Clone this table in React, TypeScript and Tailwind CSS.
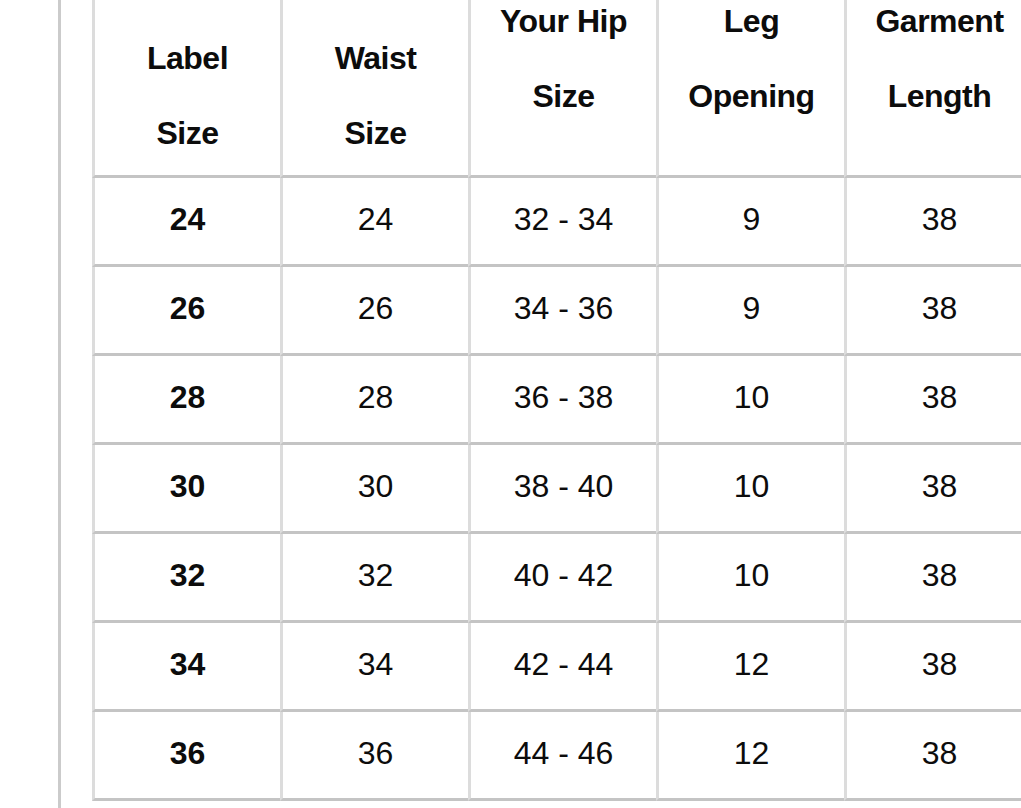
const headers = [
  { lines: ["Label", "Size"], offset: "pt-[21px]" },
  { lines: ["Waist", "Size"], offset: "pt-[21px]" },
  { lines: ["Your Hip", "Size"], offset: "-mt-[16px]" },
  { lines: ["Leg", "Opening"], offset: "-mt-[16px]" },
  { lines: ["Garment", "Length"], offset: "-mt-[16px]" },
];

const rows = [
  ["24", "24", "32 - 34", "9", "38"],
  ["26", "26", "34 - 36", "9", "38"],
  ["28", "28", "36 - 38", "10", "38"],
  ["30", "30", "38 - 40", "10", "38"],
  ["32", "32", "40 - 42", "10", "38"],
  ["34", "34", "42 - 44", "12", "38"],
  ["36", "36", "44 - 46", "12", "38"],
];

export default function App() {
  return (
    <div
      className="flex h-[808px] w-[1021px] overflow-hidden bg-white text-[#0c0c0c]"
      style={{ fontFamily: '"Liberation Sans", Arial, sans-serif' }}
    >
      <div className="w-[58px] shrink-0" />
      <div className="w-[3px] shrink-0 bg-[#cbcbcb]" />
      <div className="w-[31px] shrink-0" />

      <div className="shrink-0">
        {/* header */}
        <div className="flex">
          {headers.map((h, i) => (
            <div
              key={i}
              className="h-[178px] w-[188px] shrink-0 overflow-hidden border-b-[3px] border-l-[3px] border-b-[#c4c4c4] border-l-[#dcdcdc]"
            >
              <div
                className={`flex flex-col items-center text-[32px] font-bold leading-[75px] tracking-[-0.5px] ${h.offset}`}
              >
                {h.lines.map((l) => (
                  <span key={l}>{l}</span>
                ))}
              </div>
            </div>
          ))}
        </div>

        {/* body */}
        {rows.map((r, ri) => (
          <div key={ri} className="flex">
            {r.map((v, ci) => (
              <div
                key={ci}
                className={`flex h-[89px] w-[188px] shrink-0 items-center justify-center border-b-[3px] border-l-[3px] border-b-[#c4c4c4] border-l-[#dcdcdc] pb-[4px] text-[32px] ${
                  ci === 0 ? "font-bold" : "font-normal"
                }`}
              >
                {v}
              </div>
            ))}
          </div>
        ))}
      </div>
    </div>
  );
}
